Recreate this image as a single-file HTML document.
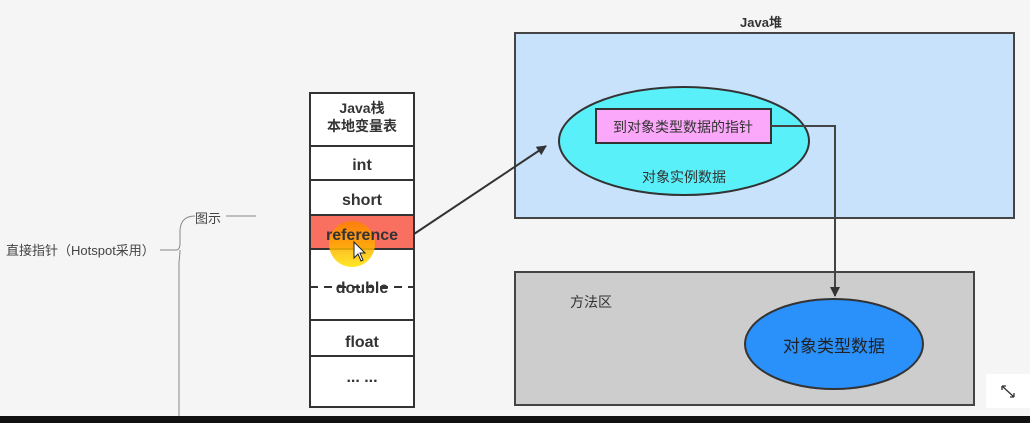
<!DOCTYPE html>
<html><head><meta charset="utf-8"><style>
body{margin:0;width:1030px;height:423px;background:#f5f5f5;overflow:hidden;position:relative;font-family:"Liberation Sans","Noto Sans CJK SC",sans-serif}
</style></head><body>
<svg width="1030" height="423" style="position:absolute;left:0;top:0" font-family="Liberation Sans, Noto Sans CJK SC, sans-serif">
<defs>
<linearGradient id="g" x1="0" y1="0" x2="0" y2="1"><stop offset="0" stop-color="#ff8000"/><stop offset="0.55" stop-color="#ffb000"/><stop offset="1" stop-color="#ffe400"/></linearGradient>
<marker id="a" markerWidth="10" markerHeight="10" refX="9" refY="5" orient="auto" markerUnits="userSpaceOnUse"><path d="M0,0 L10,5 L0,10 z" fill="#333"/></marker>
</defs>
<text x="6" y="255" font-size="13" fill="#444">直接指针（Hotspot采用）</text>
<line x1="160" y1="250" x2="176" y2="250" stroke="#888"/>
<path d="M195,216 Q181,216 180,230 L180,243 Q180,250 176,250 M180,250 Q180,254 179,262 L179,423" stroke="#888" fill="none"/>
<text x="195" y="223" font-size="13" fill="#444">图示</text>
<line x1="226" y1="216" x2="256" y2="216" stroke="#888"/>
<rect x="310" y="93" width="104" height="314" fill="#fff" stroke="#333" stroke-width="2"/>
<rect x="311" y="215" width="102" height="34" fill="#fa7060"/>
<g stroke="#333" stroke-width="2"><line x1="310" y1="146" x2="414" y2="146"/><line x1="310" y1="180" x2="414" y2="180"/><line x1="310" y1="215" x2="414" y2="215"/><line x1="310" y1="249" x2="414" y2="249"/><line x1="310" y1="320" x2="414" y2="320"/><line x1="310" y1="356" x2="414" y2="356"/></g>
<line x1="310" y1="287" x2="414" y2="287" stroke="#333" stroke-width="2" stroke-dasharray="8,6"/>
<g font-size="16" font-weight="bold" fill="#333" text-anchor="middle">
<text x="362" y="113" font-size="14">Java栈</text>
<text x="362" y="131" font-size="14">本地变量表</text>
<text x="362" y="170">int</text>
<text x="362" y="205">short</text>
<text x="362" y="293">double</text>
<text x="362" y="347">float</text>
<text x="362" y="382">... ...</text>
</g>
<circle cx="352" cy="244" r="23" fill="url(#g)" opacity="0.85"/>
<text x="362" y="240" font-size="16" font-weight="bold" fill="#333" text-anchor="middle">reference</text>
<path d="M354,242 L354,258 L358,254 L361,261 L363,260 L360,253 L365,253 Z" fill="#fff" stroke="#222" stroke-width="1"/>
<text x="761" y="27" font-size="13" font-weight="bold" fill="#333" text-anchor="middle">Java堆</text>
<rect x="515" y="33" width="499" height="185" fill="#c8e2fc" stroke="#444" stroke-width="2"/>
<ellipse cx="684" cy="141" rx="125" ry="54" fill="#5af0fa" stroke="#333" stroke-width="2"/>
<rect x="596" y="109" width="175" height="34" fill="#fca8fa" stroke="#333" stroke-width="2"/>
<text x="683" y="132" font-size="14" fill="#333" text-anchor="middle">到对象类型数据的指针</text>
<text x="684" y="182" font-size="14" fill="#333" text-anchor="middle">对象实例数据</text>
<line x1="414" y1="234" x2="546" y2="146" stroke="#333" stroke-width="2" marker-end="url(#a)"/>
<rect x="515" y="272" width="459" height="133" fill="#cdcdcd" stroke="#444" stroke-width="2"/>
<text x="570" y="307" font-size="14" fill="#333">方法区</text>
<ellipse cx="834" cy="344" rx="89" ry="45" fill="#2a90fa" stroke="#333" stroke-width="2"/>
<text x="834" y="352" font-size="17" fill="#222" text-anchor="middle">对象类型数据</text>
<path d="M771,126 L835,126 L835,296" stroke="#444" stroke-width="2" fill="none" marker-end="url(#a)"/>
<rect x="986" y="374" width="44" height="34" fill="#fff"/>
<path d="M1002,386 L1014,397 M1002,386 l0,4 M1002,386 l4,0 M1014,397 l-4,0 M1014,397 l0,-4" stroke="#333" stroke-width="1.3" fill="none"/>
<rect x="0" y="416" width="1030" height="7" fill="#111"/>
</svg>
</body></html>
